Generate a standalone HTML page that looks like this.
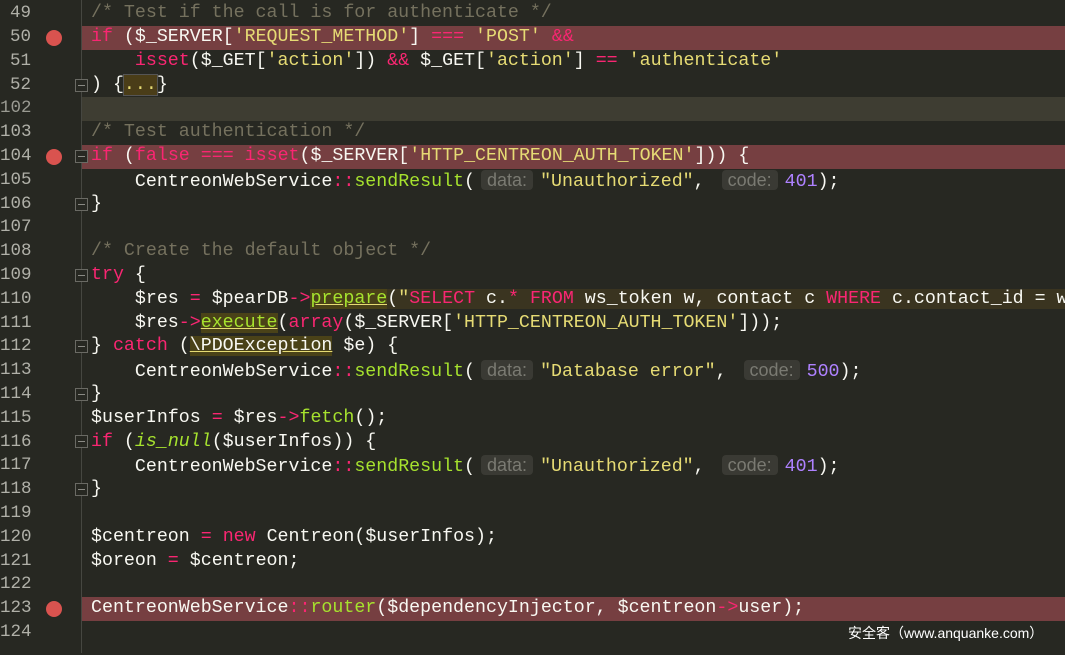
<!DOCTYPE html>
<html><head><meta charset="utf-8"><style>
body{margin:0;width:1065px;height:653px;background:#272822;overflow:hidden;position:relative;font-family:"Liberation Mono",monospace;font-size:18.3px}
.r{position:absolute;left:0;width:1065px;height:23.8px;line-height:23.8px;white-space:pre;overflow:hidden}
.n{position:absolute;left:0;width:31px;text-align:right;color:#b0b0a8;font-size:17.5px}
.c{position:absolute;left:91px;color:#f8f8f2}
.bp{background:#763f41}
.cur{background:#3e3d32}
.dot{position:absolute;left:46px;top:4px;width:16px;height:16px;border-radius:50%;background:#d9534f}
.k{color:#f92672}.s{color:#e6db74}.m{color:#75715e}.f{color:#a6e22e}.p{color:#ae81ff}
.h{font-family:"Liberation Sans",sans-serif;font-size:18px;color:#7a7a72;background:#3a3a34;border-radius:4px;padding:0 6px;margin:0 7px 0 6px}
.gl{position:absolute;left:81px;top:0;width:1px;height:653px;background:#464741}
.fold{position:absolute;left:75px;width:11px;height:11px;border:1px solid #6a6a64;background:#272822}
.fold:after{content:"";position:absolute;left:2px;top:5px;width:7px;height:1px;background:#8a8a84}
.hl{background:#4a4218}
.sb{background:#3a3420}
.u{text-decoration:underline;text-decoration-color:#e6db74}
.wm{position:absolute;left:848px;top:623px;color:#fff;font-family:"Liberation Sans","Noto Sans CJK SC",sans-serif;font-size:14px}
#w{position:absolute;left:0;top:2px;width:1065px;height:653px}
</style></head><body>
<div class="gl"></div>
<div id="w">
<div class="r" style="top:0px"><span class="n">49</span><span class="c m">/* Test if the call is for authenticate */</span></div>
<div class="r bp" style="top:24px;left:82px;width:983px"></div>
<div class="r" style="top:24px"><span class="n">50</span><span class="dot"></span><span class="c"><span class="k">if</span> ($_SERVER[<span class="s">'REQUEST_METHOD'</span>] <span class="k">===</span> <span class="s">'POST'</span> <span class="k">&amp;&amp;</span></span></div>
<div class="r" style="top:48px"><span class="n">51</span><span class="c">    <span class="k">isset</span>($_GET[<span class="s">'action'</span>]) <span class="k">&amp;&amp;</span> $_GET[<span class="s">'action'</span>] <span class="k">==</span> <span class="s">'authenticate'</span></span></div>
<div class="r" style="top:71.6px"><span class="n">52</span><span class="c">) {<span style="background:#4a3d18;outline:1px solid #555;color:#e6db74">...</span>}</span></div>
<div class="r cur" style="top:95.4px;left:82px;width:983px"></div>
<div class="r" style="top:95.4px"><span class="n" style="color:#9a9a92">102</span></div>
<div class="r" style="top:119.2px"><span class="n">103</span><span class="c m">/* Test authentication */</span></div>
<div class="r bp" style="top:143px;left:82px;width:983px"></div>
<div class="r" style="top:143px"><span class="n">104</span><span class="dot"></span><span class="c"><span class="k">if</span> (<span class="k">false</span> <span class="k">===</span> <span class="k">isset</span>($_SERVER[<span class="s">'HTTP_CENTREON_AUTH_TOKEN'</span>])) {</span></div>
<div class="r" style="top:166.8px"><span class="n">105</span><span class="c">    CentreonWebService<span class="k">::</span><span class="f">sendResult</span>(<span class="h">data:</span><span class="s">"Unauthorized"</span>, <span class="h">code:</span><span class="p">401</span>);</span></div>
<div class="r" style="top:190.6px"><span class="n">106</span><span class="c">}</span></div>
<div class="r" style="top:214.4px"><span class="n">107</span></div>
<div class="r" style="top:238.2px"><span class="n">108</span><span class="c m">/* Create the default object */</span></div>
<div class="r" style="top:262px"><span class="n">109</span><span class="c"><span class="k">try</span> {</span></div>
<div class="r" style="top:285.8px"><span class="n">110</span><span class="c">    $res <span class="k">=</span> $pearDB<span class="k">-&gt;</span><span class="f hl u">prepare</span><span class="sb">(<span class="s">"</span><span class="k">SELECT</span> c.<span class="k">*</span> <span class="k">FROM</span> ws_token w, contact c <span class="k">WHERE</span> c.contact_id = w.contact_id</span></span></div>
<div class="r" style="top:309.6px"><span class="n">111</span><span class="c">    $res<span class="k">-&gt;</span><span class="f hl u">execute</span>(<span class="k">array</span>($_SERVER[<span class="s">'HTTP_CENTREON_AUTH_TOKEN'</span>]));</span></div>
<div class="r" style="top:333.4px"><span class="n">112</span><span class="c">} <span class="k">catch</span> (<span class="hl u">\PDOException</span> $e) {</span></div>
<div class="r" style="top:357.2px"><span class="n">113</span><span class="c">    CentreonWebService<span class="k">::</span><span class="f">sendResult</span>(<span class="h">data:</span><span class="s">"Database error"</span>, <span class="h">code:</span><span class="p">500</span>);</span></div>
<div class="r" style="top:381px"><span class="n">114</span><span class="c">}</span></div>
<div class="r" style="top:404.8px"><span class="n">115</span><span class="c">$userInfos <span class="k">=</span> $res<span class="k">-&gt;</span><span class="f">fetch</span>();</span></div>
<div class="r" style="top:428.6px"><span class="n">116</span><span class="c"><span class="k">if</span> (<i class="f">is_null</i>($userInfos)) {</span></div>
<div class="r" style="top:452.4px"><span class="n">117</span><span class="c">    CentreonWebService<span class="k">::</span><span class="f">sendResult</span>(<span class="h">data:</span><span class="s">"Unauthorized"</span>, <span class="h">code:</span><span class="p">401</span>);</span></div>
<div class="r" style="top:476.2px"><span class="n">118</span><span class="c">}</span></div>
<div class="r" style="top:500px"><span class="n">119</span></div>
<div class="r" style="top:523.8px"><span class="n">120</span><span class="c">$centreon <span class="k">=</span> <span class="k">new</span> Centreon($userInfos);</span></div>
<div class="r" style="top:547.6px"><span class="n">121</span><span class="c">$oreon <span class="k">=</span> $centreon;</span></div>
<div class="r" style="top:571.4px"><span class="n">122</span></div>
<div class="r bp" style="top:595px;left:82px;width:983px"></div>
<div class="r" style="top:595px"><span class="n">123</span><span class="dot"></span><span class="c">CentreonWebService<span class="k">::</span><span class="f">router</span>($dependencyInjector, $centreon<span class="k">-&gt;</span>user);</span></div>
<div class="r" style="top:618.8px"><span class="n">124</span></div>
<div class="fold" style="top:77px"></div>
<div class="fold" style="top:148px"></div>
<div class="fold" style="top:196px"></div>
<div class="fold" style="top:267px"></div>
<div class="fold" style="top:338px"></div>
<div class="fold" style="top:386px"></div>
<div class="fold" style="top:433px"></div>
<div class="fold" style="top:481px"></div>
</div>
<div class="wm">安全客（www.anquanke.com）</div>
</body></html>
